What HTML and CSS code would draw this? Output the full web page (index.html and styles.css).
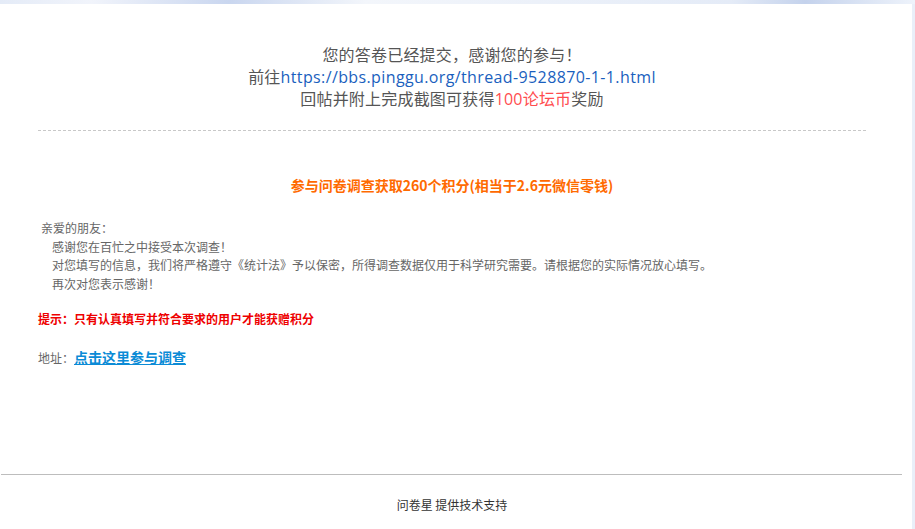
FILE: index.html
```html
<!DOCTYPE html>
<html lang="zh-CN">
<head>
<meta charset="utf-8">
<title>问卷星</title>
<link rel="stylesheet" href="styles.css">
</head>
<body>
<div class="topstrip"></div>
<div class="page">
  <main class="content">
    <section class="thanks">
      <p>您的答卷已经提交，感谢您的参与！</p>
      <p>前往<a class="thread" href="#">https://bbs.pinggu.org/thread-9528870-1-1.html</a></p>
      <p>回帖并附上完成截图可获得<span class="coin">100论坛币</span>奖励</p>
    </section>
    <hr class="dash">
    <h2 class="promo">参与问卷调查获取260个积分(相当于2.6元微信零钱)</h2>
    <div class="letter">
      <p class="greet">亲爱的朋友：</p>
      <p class="ind">感谢您在百忙之中接受本次调查！</p>
      <p class="ind">对您填写的信息，我们将严格遵守《统计法》予以保密，所得调查数据仅用于科学研究需要。请根据您的实际情况放心填写。</p>
      <p class="ind">再次对您表示感谢！</p>
    </div>
    <p class="tip">提示：只有认真填写并符合要求的用户才能获赠积分</p>
    <p class="addr">地址：<a class="go" href="#">点击这里参与调查</a></p>
  </main>
  <footer class="foot">
    <div class="footline"></div>
    <p class="support">问卷星 提供技术支持</p>
  </footer>
</div>
</body>
</html>
```
FILE: styles.css
```css
html, body {
  margin: 0;
  padding: 0;
}
body {
  background: #e9eff9;
  font-family: "Noto Sans CJK SC", "Noto Sans", sans-serif;
  width: 915px;
  height: 529px;
  overflow: hidden;
}
.topstrip {
  height: 4px;
  background: linear-gradient(90deg, #e4ebf7 0%, #f1f4fb 10%, #c9d6ef 25%, #f3f6fb 40%, #e4ebf7 80%, #c4d2ec 88%, #eef3fb 100%);
}
.page {
  width: 912px;
  height: 525px;
  background: #fff;
  display: flex;
  flex-direction: column;
}
.content {
  flex: 1;
  padding: 0 46px 0 38px;
}
.thanks {
  margin-top: 40px;
  text-align: center;
  font-family: "Open Sans", "Noto Sans CJK SC", sans-serif;
  font-size: 16px;
  line-height: 22px;
  color: #555;
}
.thanks p {
  margin: 0;
  letter-spacing: 0.2px;
}
.thread {
  color: #1a5fbe;
  text-decoration: none;
  letter-spacing: 0.38px;
}
.coin {
  color: #ff4d4f;
}
.dash {
  margin: 20px 0 0;
  border: 0;
  border-top: 1px dashed #c8c8c8;
  height: 0;
}
.promo {
  margin: 44px 0 0;
  text-align: center;
  font-size: 14px;
  line-height: 20px;
  font-weight: bold;
  color: #ff6a00;
}
.letter {
  margin-top: 24px;
  font-size: 12px;
  line-height: 18.5px;
  color: #666;
}
.letter p {
  margin: 0;
}
.greet {
  padding-left: 3px;
}
.ind {
  padding-left: 14px;
}
.tip {
  margin: 17px 0 0;
  font-size: 12px;
  line-height: 18px;
  font-weight: bold;
  color: #ee0000;
}
.addr {
  margin: 19px 0 0;
  font-size: 12px;
  line-height: 20px;
  color: #666;
}
.go {
  font-size: 14px;
  font-weight: bold;
  color: #0b8bd6;
  text-decoration: underline;
}
.foot {
  height: 55px;
}
.footline {
  margin-left: 1px;
  width: 901px;
  border-top: 1px solid #bdbdbd;
}
.support {
  margin: 21px 0 0;
  padding-right: 8px;
  text-align: center;
  font-size: 12px;
  line-height: 18px;
  color: #333;
}
```
